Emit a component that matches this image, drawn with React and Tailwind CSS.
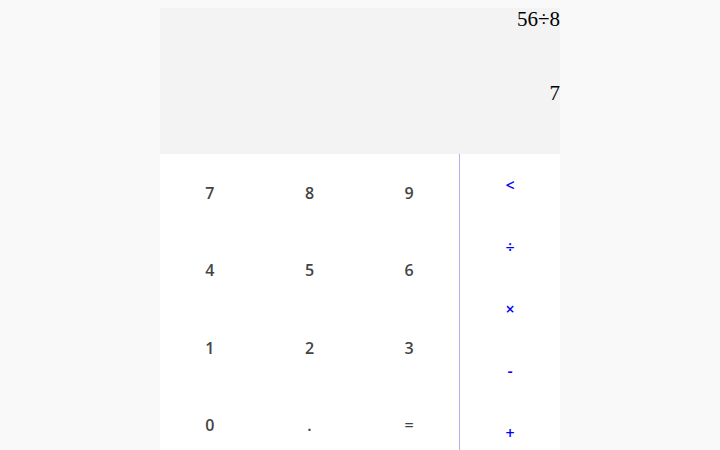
export default function App() {
  const nums = ["7", "8", "9", "4", "5", "6", "1", "2", "3", "0", ".", "="];
  const ops = ["<", "÷", "×", "-", "+"];

  return (
    <div className="h-[450px] overflow-hidden bg-[#f9f9f9] pt-2">
      <div className="mx-auto w-[400px]">
        <div className="h-[146px] bg-[#f3f3f3] text-right text-[21px] leading-[23px] text-black" style={{ fontFamily: '"Liberation Serif", serif' }}>
          <div>56÷8</div>
          <div className="mt-[51px]">7</div>
        </div>
        <div className="flex bg-white" style={{ fontFamily: '"Open Sans", sans-serif' }}>
          <div className="grid w-[299px] grid-cols-3">
            {nums.map((n) => (
              <button key={n} className="flex h-[77.5px] items-center justify-center text-[16px] font-semibold text-[#444]">
                {n}
              </button>
            ))}
          </div>
          <div className="flex w-[101px] flex-col border-l border-[#b0b0ee]">
            {ops.map((o) => (
              <button key={o} className="flex h-[62px] items-center justify-center pb-[1px] text-[16px] font-semibold text-[#0000ff]">
                {o}
              </button>
            ))}
          </div>
        </div>
      </div>
    </div>
  );
}
